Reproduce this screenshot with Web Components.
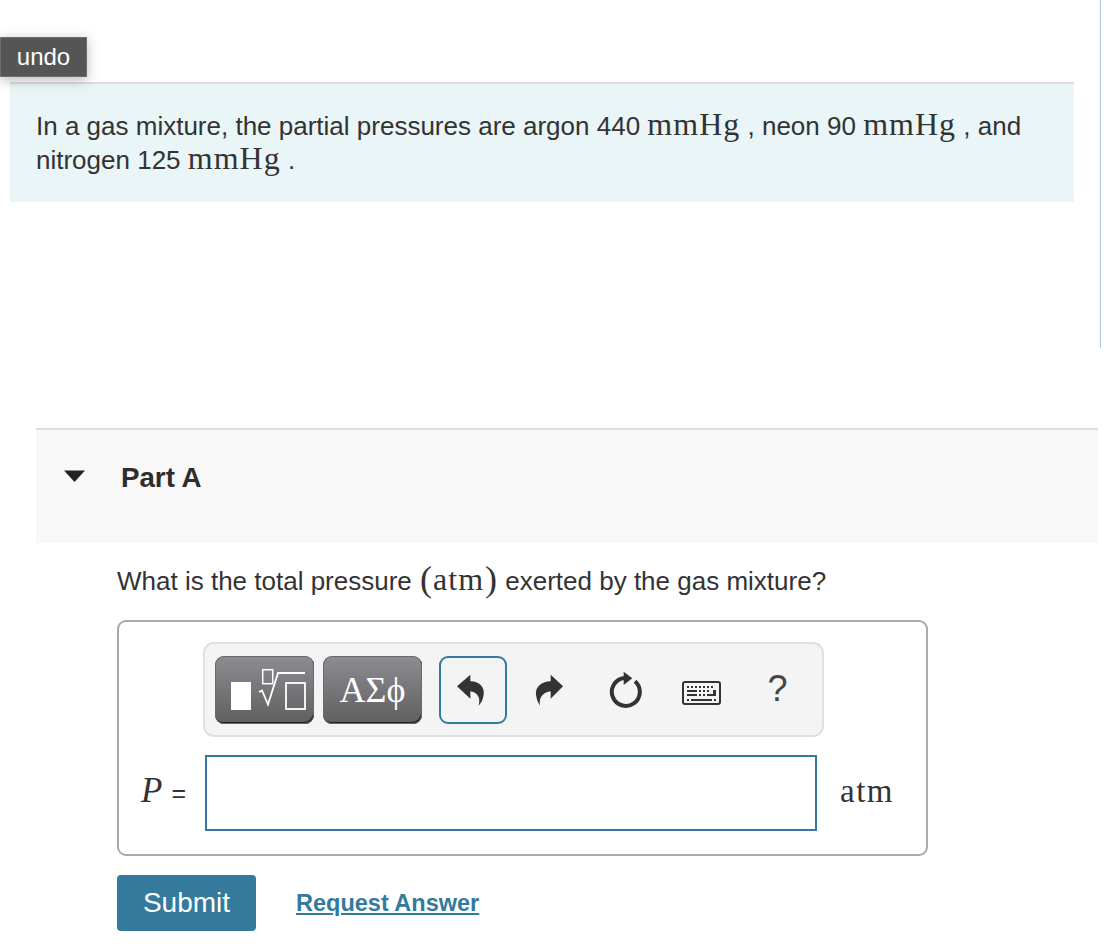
<!DOCTYPE html>
<html lang="en"><head><meta charset="utf-8"><title>Part A</title>
<style>
html,body{margin:0;padding:0;background:#fff}
body{font-family:"Liberation Sans",Arial,sans-serif;color:#333;width:1114px;height:948px;overflow:hidden}
</style></head><body>
<quiz-page>
  <top-section>
    <undo-tag slot="tag">undo</undo-tag>
    <intro-box><span>In a gas mixture, the partial pressures are argon 440</span> <math-text>mmHg</math-text> <span>, neon 90</span> <math-text>mmHg</math-text> <span>, and</span> <span>nitrogen 125</span> <math-text>mmHg</math-text> <span>.</span></intro-box>
  </top-section>
  <part-header>Part A</part-header>
  <part-body>
    <question-text><span>What is the total pressure</span> <math-text><big-paren>(</big-paren>atm<big-paren>)</big-paren></math-text> <span>exerted by the gas mixture?</span></question-text>
    <answer-box></answer-box>
    <action-row></action-row>
  </part-body>
</quiz-page>
<script>
const def=(name,css,html)=>customElements.define(name,class extends HTMLElement{
  constructor(){super();const r=this.attachShadow({mode:"open"});r.innerHTML=`<style>${css}</style>${html}`;}
});
def("quiz-page",":host{display:block;width:1114px}","<slot></slot>");
def("top-section",":host{display:flex;flex-direction:column;box-sizing:border-box;width:1101px;height:348px;padding-top:37px;border-right:1px solid #aecbdc}","<slot name='tag'></slot><slot></slot>");
def("undo-tag",`:host{display:flex;align-items:center;justify-content:center;box-sizing:border-box;width:87px;height:40px;background:#555;color:#fff;font-size:24px;border:1px solid #6e6e6e;box-shadow:0 3px 12px rgba(0,0,0,.28);position:relative;z-index:1}`,"<slot></slot>");
def("intro-box",`:host{display:block;box-sizing:border-box;width:1064px;height:120px;margin:5px 0 0 10px;padding:25px 36px 0 26px;background:#e9f5f7;border-top:2px solid #dedede;font-size:26px;line-height:34px;color:#333}`,"<slot></slot>");
def("math-text",`:host{font-family:"Liberation Serif","Times New Roman",serif;font-size:32px;line-height:0;letter-spacing:1px;color:#333}`,"<slot></slot>");
def("big-paren",`:host{font-size:36px;line-height:0;letter-spacing:0;font-weight:400;vertical-align:-1px;margin:0 1px}`,"<slot></slot>");
def("part-header",`:host{display:flex;align-items:flex-start;box-sizing:border-box;width:1062px;height:115px;margin:80px 0 0 36px;padding:32px 0 0 28px;background:#f8f8f8;border-top:2px solid #dedede;font-weight:700;font-size:27.700px;line-height:32px;color:#2d2d2d}
svg{width:21px;height:12px;margin:8px 36px 0 0;flex:none}`,`<svg viewBox="0 0 21 12" aria-hidden="true"><path d="M0 .5h21L10.500 12z" fill="#222"/></svg><slot></slot>`);
def("part-body",":host{display:block;padding:20px 0 0 117px}","<slot></slot>");
def("question-text",`:host{display:block;font-size:26px;line-height:36px;color:#333}`,"<slot></slot>");
def("tool-btn",`:host{display:flex;align-items:center;justify-content:center;box-sizing:border-box;width:99px;height:68px;border-radius:9px;background:linear-gradient(#8d8c92,#5f5f5f);box-shadow:inset 0 0 0 1px #6a6a6a,inset -1px -2px 0 #222;color:#fff;font-family:"Liberation Serif",serif;font-size:36px}`,"<slot></slot>");
def("icon-btn",`:host{display:flex;align-items:center;justify-content:center;box-sizing:border-box;width:68px;height:68px;border-radius:9px;color:#444;font-size:36px;font-weight:400}
:host([focused]){border:2px solid #337a9c}`,"<slot></slot>");
def("answer-box",`:host{display:block;box-sizing:border-box;width:811px;height:236px;margin-top:21px;border:2px solid #aaa;border-radius:9px;background:#fff;padding:20px 0 0 84px}
.bar{display:flex;align-items:center;gap:8px;box-sizing:border-box;width:621px;height:95px;padding-left:10px;background:#f4f4f4;border:2px solid #e0e0e0;border-radius:11px}
.tools{display:flex;gap:9px;margin-right:9px}
.row{display:flex;align-items:center;margin:18px 0 0 -84px}
.lab{display:flex;align-items:baseline;box-sizing:border-box;width:86px;padding:0 0 5px 22px;font-size:25px;color:#333}
.lab i{font-family:"Liberation Serif",serif;font-size:35px;margin-right:9px}
.inp{box-sizing:border-box;width:612px;height:76px;border:2px solid #337a9c;background:#fff}
.unit{font-family:"Liberation Serif",serif;font-size:33px;letter-spacing:1.500px;margin-left:23px;padding-bottom:4px;color:#333}
svg{display:block}`,
`<div class="bar">
<div class="tools">
<tool-btn aria-label="templates"><svg width="99" height="68" viewBox="215 655 99 68" fill="none"><rect x="231" y="681" width="20" height="28" fill="#fff"/><rect x="262.700" y="668.700" width="10" height="14" stroke="#fff" stroke-width="1.500"/><path d="M259 691l3-1.500 6 14 10-31.500h27" stroke="#fff" stroke-width="1.800"/><rect x="286" y="682" width="19" height="26" stroke="#fff" stroke-width="1.800"/></svg></tool-btn>
<tool-btn>ΑΣϕ</tool-btn>
</div>
<icon-btn focused aria-label="undo"><svg width="30" height="34" viewBox="775 110 90 102" style="margin-left:-3px"><path d="M775 150L815 115V135C845 135 858 155 855 175C853 190 847 200 840 208C845 190 842 170 815 165V187Z" fill="#333"/></svg></icon-btn>
<icon-btn aria-label="redo"><svg width="30" height="34" viewBox="70 110 90 102"><path d="M157 150L120 115V135C90 135 73 155 76 175C78 190 83 200 88 208C85 190 90 170 120 165V187Z" fill="#333"/></svg></icon-btn>
<icon-btn aria-label="reset"><svg width="34" height="37" viewBox="294 106 102 111" fill="none" style="margin-top:-1px"><path d="M343 127A42 42 0 1 0 375 137" stroke="#333" stroke-width="12"/><path d="M341 108L367 128L341 148Z" fill="#333"/></svg></icon-btn>
<icon-btn aria-label="keyboard"><svg width="39" height="24" viewBox="0 0 39 24" style="margin-top:6px"><rect x="1" y="1" width="37" height="22" rx="2" fill="#f4f4f4" stroke="#333" stroke-width="2"/><path d="M5 5h2v2H5zM9 5h2v2H9zM13 5h2v2h-2zM17 5h2v2h-2zM21 5h2v2h-2zM25 5h2v2h-2zM29 5h2v2h-2zM5 9h10v2H5zM17 9h2v2h-2zM21 9h2v2h-2zM25 9h2v2h-2zM31 9h3v6h-3zM5 13h10v2H5zM17 13h2v2h-2zM21 13h2v2h-2zM25 13h9v2h-9zM5 18h2v2H5zM9 18h21v2H9zM32 18h2v2h-2z" fill="#333"/></svg></icon-btn>
<icon-btn aria-label="help"><span style="margin:-1px 0 0 1px">?</span></icon-btn>
</div>
<div class="row"><div class="lab"><i>P</i>=</div><div class="inp"></div><span class="unit">atm</span></div>`);
def("action-row",`:host{display:flex;align-items:center;margin-top:19px}
button{box-sizing:border-box;width:139px;height:56px;border:0;border-radius:4px;background:#337a9c;color:#fff;font:28px "Liberation Sans",Arial,sans-serif;padding:0}
a{margin-left:40px;color:#337a9c;font-weight:700;font-size:23.500px;text-decoration:underline}`,
`<button>Submit</button><a href="#">Request Answer</a>`);
</script>
</body></html>
